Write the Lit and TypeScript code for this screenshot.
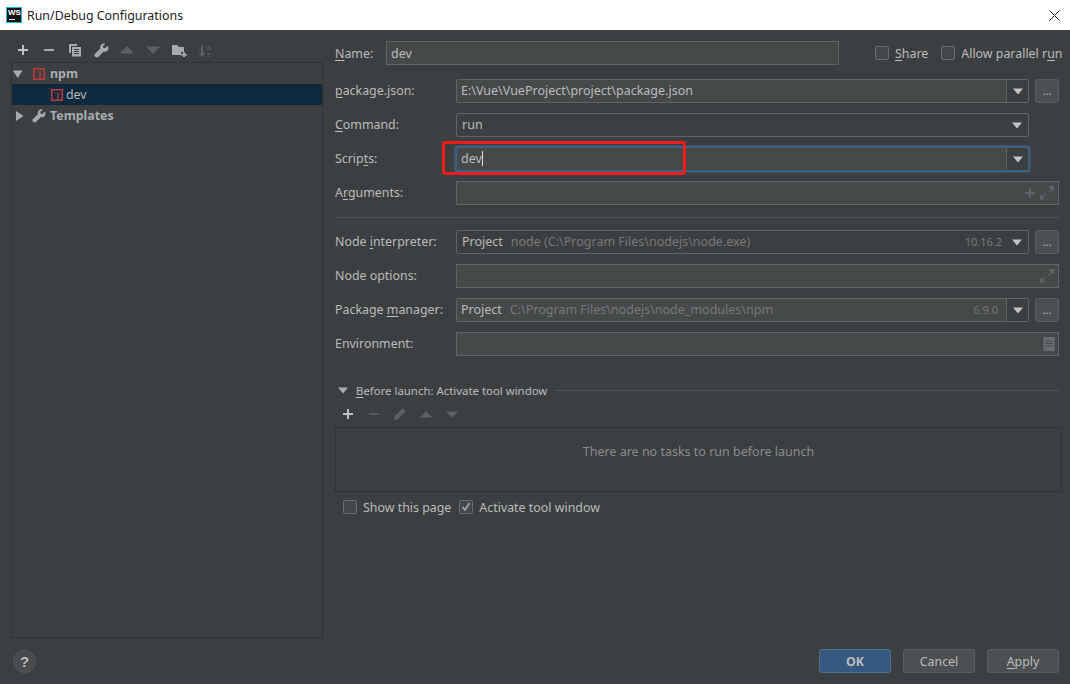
import { LitElement, html, css } from "lit";
import { customElement } from "lit/decorators.js";

const caret = html`<svg class="caret" width="12" height="7" viewBox="0 0 12 7"><path d="M1 0.5h10L6 6.500z" fill="#c4c4c4"/></svg>`;
const expand = html`<svg width="16" height="16" viewBox="0 0 16 16"><path d="M9 1h6v6l-2-2-3 3-1-1 3-3zM1 15V9l2 2 3-3 1 1-3 3 2 2z" fill="#5f6365"/></svg>`;
const wrench = (c: string, s = 16) => html`<svg width="${s}" height="${s}" viewBox="0 0 16 16"><path d="M14.600 2.900l-2.800 2.800-1.900-.4-.4-1.900L12.300.6C10.500.1 8.700.6 7.700 1.700 6.600 2.800 6.300 4.400 6.800 5.900L.9 11.800c-.6.600-.6 1.600 0 2.300l1 1c.6.600 1.600.6 2.300 0l5.900-5.900c1.500.5 3.100.2 4.200-.9 1.100-1.100 1.600-2.900.3-5.400z" fill="${c}"/></svg>`;
const npm = html`<svg width="12" height="12" viewBox="0 0 12 12"><rect x=".75" y=".75" width="10.500" height="10.500" fill="none" stroke="#c23b3b" stroke-width="1.500"/><path d="M3 4h6" stroke="#c23b3b" stroke-width="1" opacity=".65"/><path d="M7 4.500V11" stroke="#c23b3b" stroke-width="1.300"/></svg>`;

@customElement("app-root")
export class AppRoot extends LitElement {
  static styles = css`
    :host { display: block; width: 1070px; height: 684px; overflow: hidden; position: relative;
      font-family: "Noto Sans", "Open Sans", sans-serif; font-size: 12.400px; color: #bbbbbb; }
    * { box-sizing: border-box; }
    u { text-underline-offset: 2px; text-decoration-thickness: 1px; }
    .title { height: 30px; background: #fff; color: #222; display: flex; align-items: center; padding-left: 6px; gap: 5px; }
    .ws { width: 16px; height: 16px; background: #111; border: 1px solid #20b8e0; color: #fff; font: bold 8px/9px "Liberation Sans", sans-serif; padding-left: 1px; position: relative; }
    .ws i { position: absolute; left: 2px; bottom: 2px; width: 6px; height: 1px; background: #fff; }
    .close { margin-left: auto; margin-right: 10px; display: flex; }
    .body { height: 654px; background: #3c3f41; display: flex; }
    .left { width: 335px; padding-left: 11px; display: flex; flex-direction: column; flex: none; }
    .tools { height: 32px; padding: 8px 0 0 4px; display: flex; align-items: center; gap: 10px; }
    .tools span { width: 16px; height: 16px; display: flex; align-items: center; justify-content: center; }
    .tree { width: 312px; height: 576px; border: 1px solid #323232; }
    .node { height: 21px; display: flex; align-items: center; }
    .node.sel { background: #0d293e; }
    .node b { font-weight: 700; color: #a9adb0; }
    .help { width: 23px; height: 23px; border-radius: 50%; border: 1px solid #55595b; background: #484b4d; margin: 12px 0 0 2px; display: flex; align-items: center; justify-content: center; font: bold 15px "Liberation Sans", sans-serif; color: #bbb; }
    .right { flex: 1; padding-top: 11px; display: flex; flex-direction: column; }
    .row { display: flex; height: 24px; margin-bottom: 10px; align-items: center; }
    .row.first { margin-bottom: 14px; }
    .row:not(.first) .lab { padding-bottom: 2px; }
    .lab { width: 121px; flex: none; }
    .lab.s { width: 51px; }
    .f { height: 24px; background: #45494a; border: 1px solid #646464; display: flex; align-items: center; padding-left: 4px; font-size: 12.500px; }
    .f.name { width: 453px; }
    .f.wide { width: 603px; justify-content: flex-end; padding-right: 3px; gap: 3px; }
    .combo { width: 573px; border-radius: 2px; padding-right: 0; padding-bottom: 2px; }
    .combo.dark { background: #3c3f41; padding-left: 5px; }
    .combo .end { margin: 2px 0 0 auto; width: 22px; height: 22px; display: flex; align-items: center; justify-content: center; flex: none; }
    .combo .ver + .end { margin-left: 0; }
    .combo .end.sep { border-left: 1px solid #646464; background: #3c3f41; }
    .focus { border-color: #3d6185; box-shadow: 0 0 0 1.500px #3d6185; }
    .cursor { display: inline-block; width: 1px; height: 15px; background: #ddd; }
    .more { width: 24px; height: 24px; margin-left: 6px; background: #4c5052; border: 1px solid #5e6060; border-radius: 3px; display: flex; align-items: center; justify-content: center; font-size: 11px; padding-bottom: 2px; }
    .chk { display: flex; align-items: center; gap: 6px; }
    .box { width: 14px; height: 14px; border: 1px solid #6b6b6b; border-radius: 2px; background: #43494a; display: flex; align-items: center; justify-content: center; flex: none; }
    .opts { margin-left: 36px; display: flex; gap: 13px; white-space: nowrap; }
    .dim { color: #787878; margin-left: 8px; }
    .ver { margin-left: auto; color: #787878; font-size: 11px; padding-right: 4px; }
    .ver.b { padding-right: 8px; }
    hr { border: 0; height: 1px; background: #515151; margin: 2px 0 12px; width: 724px; }
    .before { height: 14px; margin: 17px 0 0 3px; display: flex; align-items: center; gap: 8px; font-size: 11.400px; }
    .before .ln { flex: 1; height: 1px; background: #515151; margin-right: 11px; }
    .btools { height: 24px; margin-top: 5px; padding-left: 5px; display: flex; align-items: center; gap: 10px; }
    .btools span { width: 16px; display: flex; justify-content: center; align-items: center; }
    .tasks { width: 727px; height: 65px; margin-top: 1px; border: 1px solid #323232; padding-top: 15px; text-align: center; color: #8a8c8e; font-size: 12.500px; }
    .after { margin: 7px 0 0 8px; display: flex; gap: 8px; height: 16px; align-items: center; }
    .foot { margin-top: auto; margin-bottom: 11px; padding-right: 11px; display: flex; justify-content: flex-end; gap: 12px; }
    .btn { width: 72px; height: 24px; border: 1px solid #5e6060; background: #4c5052; border-radius: 3px; display: flex; align-items: center; justify-content: center; }
    .btn.ok { background: #365880; border-color: #4c708c; font-weight: 700; }
    .mark { position: absolute; left: 442px; top: 141px; width: 244px; height: 34px; border: 3px solid #f01c1c; border-radius: 3px; pointer-events: none; }
  `;

  render() {
    const d = "#5d6163";
    return html`
      <div class="title">
        <div class="ws">WS<i></i></div>
        <span>Run/Debug Configurations</span>
        <span class="close"><svg width="11" height="11" viewBox="0 0 11 11"><path d="M.5.5l10 10M10.500.5l-10 10" stroke="#222" fill="none"/></svg></span>
      </div>
      <div class="body">
        <div class="left">
          <div class="tools">
            <span><svg width="12" height="12" viewBox="0 0 12 12"><path d="M5 1h2v4h4v2H7v4H5V7H1V5h4z" fill="#bfc1c3"/></svg></span>
            <span><svg width="12" height="12" viewBox="0 0 12 12"><path d="M1 5h10v2H1z" fill="#a8abad"/></svg></span>
            <span><svg width="14" height="14" viewBox="0 0 14 14"><path d="M1 1h8v2H3v7H1z" fill="#a8abad"/><path d="M4 4h9v9.500H4z" fill="#a8abad"/><path d="M6 6.500h5M6 8.500h5M6 10.500h5" stroke="#3c3f41"/></svg></span>
            <span>${wrench("#a8abad", 15)}</span>
            <span><svg width="14" height="8" viewBox="0 0 14 8"><path d="M7 0l7 7.500H0z" fill="${d}"/></svg></span>
            <span><svg width="14" height="8" viewBox="0 0 14 8"><path d="M7 8L0 .5h14z" fill="${d}"/></svg></span>
            <span><svg width="15" height="13" viewBox="0 0 15 13"><path d="M0 1h5l2 2h5v5H9v3H0z" fill="#a8abad"/><path d="M11 8h2v2h2v1.500h-2v1.500h-2v-1.500H9V10h2z" fill="#a8abad"/></svg></span>
            <span><svg width="15" height="15" viewBox="0 0 15 15"><path d="M3 2h2v8h2.500L4 14 .5 10H3z" fill="${d}"/><text x="8.500" y="6.500" font-size="8" font-family="Liberation Sans" fill="${d}">a</text><text x="8.500" y="14" font-size="8" font-family="Liberation Sans" fill="${d}">z</text></svg></span>
          </div>
          <div class="tree">
            <div class="node" style="padding-left:1px">
              <svg width="10" height="10" viewBox="0 0 10 10" style="margin-right:10px"><path d="M0 1.500h9.500L4.750 9z" fill="#a8abad"/></svg>
              ${npm}<b style="margin-left:5px">npm</b>
            </div>
            <div class="node sel" style="padding-left:39px">${npm}<span style="margin-left:3px">dev</span></div>
            <div class="node" style="padding-left:3px">
              <svg width="9" height="10" viewBox="0 0 9 10" style="margin-right:8px"><path d="M1 0l7.500 5L1 10z" fill="#a8abad"/></svg>
              ${wrench("#a8abad", 14)}<b style="margin-left:4px">Templates</b>
            </div>
          </div>
          <div class="help">?</div>
        </div>
        <div class="right">
          <div class="row first">
            <span class="lab s"><u>N</u>ame:</span>
            <div class="f name">dev</div>
            <div class="opts">
              <span class="chk"><span class="box"></span><span><u>S</u>hare</span></span>
              <span class="chk"><span class="box"></span><span>Allow parallel r<u>u</u>n</span></span>
            </div>
          </div>
          <div class="row">
            <span class="lab"><u>p</u>ackage.json:</span>
            <div class="f combo">E:\\Vue\\VueProject\\project\\package.json<span class="end sep">${caret}</span></div>
            <div class="more">...</div>
          </div>
          <div class="row">
            <span class="lab"><u>C</u>ommand:</span>
            <div class="f combo dark">run<span class="end">${caret}</span></div>
          </div>
          <div class="row">
            <span class="lab">Scrip<u>t</u>s:</span>
            <div class="f combo focus">dev<span class="cursor"></span><span class="end sep">${caret}</span></div>
          </div>
          <div class="row">
            <span class="lab">A<u>r</u>guments:</span>
            <div class="f wide"><svg width="12" height="12" viewBox="0 0 12 12"><path d="M5 1h2v4h4v2H7v4H5V7H1V5h4z" fill="#5f6365"/></svg>${expand}</div>
          </div>
          <hr />
          <div class="row">
            <span class="lab">Node <u>i</u>nterpreter:</span>
            <div class="f combo dark">Project<span class="dim">node (C:\\Program Files\\nodejs\\node.exe)</span><span class="ver">10.16.2</span><span class="end">${caret}</span></div>
            <div class="more">...</div>
          </div>
          <div class="row">
            <span class="lab">Node options:</span>
            <div class="f wide">${expand}</div>
          </div>
          <div class="row">
            <span class="lab">Package <u>m</u>anager:</span>
            <div class="f combo">Project<span class="dim">C:\\Program Files\\nodejs\\node_modules\\npm</span><span class="ver b">6.9.0</span><span class="end sep">${caret}</span></div>
            <div class="more">...</div>
          </div>
          <div class="row">
            <span class="lab">Environment:</span>
            <div class="f wide"><svg width="12" height="14" viewBox="0 0 12 14"><path d="M.5 0h11v14H.5z" fill="#6a6d6f"/><path d="M2.500 4h7M2.500 6.500h7M2.500 9h7" stroke="#45494a"/></svg></div>
          </div>
          <div class="before">
            <svg width="10" height="7" viewBox="0 0 10 7"><path d="M0 .5h10L5 6.500z" fill="#a8abad"/></svg>
            <span><u>B</u>efore launch: Activate tool window</span>
            <span class="ln"></span>
          </div>
          <div class="btools">
            <span><svg width="12" height="12" viewBox="0 0 12 12"><path d="M5 1h2v4h4v2H7v4H5V7H1V5h4z" fill="#bfc1c3"/></svg></span>
            <span><svg width="12" height="12" viewBox="0 0 12 12"><path d="M1 5.500h10v1.500H1z" fill="${d}"/></svg></span>
            <span><svg width="14" height="14" viewBox="0 0 14 14"><path d="M10 1l3 3-8 8-4 1 1-4z" fill="${d}"/></svg></span>
            <span><svg width="12" height="7" viewBox="0 0 12 7"><path d="M6 0l6 6.500H0z" fill="${d}"/></svg></span>
            <span><svg width="12" height="7" viewBox="0 0 12 7"><path d="M6 7L0 .5h12z" fill="${d}"/></svg></span>
          </div>
          <div class="tasks">There are no tasks to run before launch</div>
          <div class="after">
            <span class="chk"><span class="box"></span><span>Show this page</span></span>
            <span class="chk"><span class="box"><svg width="10" height="10" viewBox="0 0 10 10"><path d="M1.500 5l2.500 3 4.500-7" fill="none" stroke="#a8abad" stroke-width="1.600"/></svg></span><span>Activate tool window</span></span>
          </div>
          <div class="foot">
            <div class="btn ok">OK</div>
            <div class="btn">Cancel</div>
            <div class="btn"><span><u>A</u>pply</span></div>
          </div>
        </div>
      </div>
      <div class="mark"></div>
    `;
  }
}
